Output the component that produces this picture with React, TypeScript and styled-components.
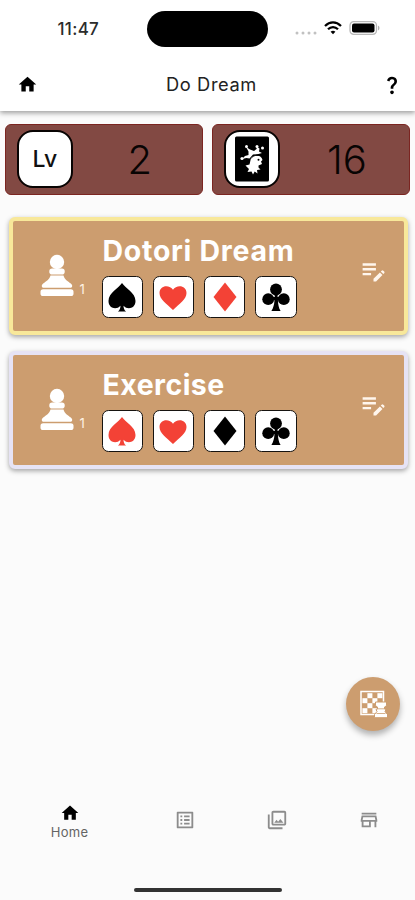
import React from "react";
import styled, { createGlobalStyle } from "styled-components";
import {
  MdHome,
  MdQuestionMark,
  MdEditNote,
  MdOutlineListAlt,
  MdOutlinePhotoLibrary,
  MdOutlineStore,
} from "react-icons/md";

const GlobalStyle = createGlobalStyle`
  * { box-sizing: border-box; }
  html, body { margin: 0; background: #fbfbfb; }
  body { font-family: Inter, Roboto, sans-serif; color: #111; }
  svg { display: block; flex: none; }
`;

const Screen = styled.div`
  width: 415px;
  height: 900px;
  display: flex;
  flex-direction: column;
  background: #fbfbfb;
  overflow: hidden;
`;

const Header = styled.header`
  height: 111px;
  flex: none;
  background: #fff;
  box-shadow: 0 2px 5px rgba(0, 0, 0, 0.38);
`;

const StatusBar = styled.div`
  height: 58px;
  display: grid;
  grid-template-columns: 147px 121px 1fr;
  align-items: center;
`;

const Clock = styled.span`
  padding-left: 57.5px;
  font-size: 17px;
  font-weight: 500;
  letter-spacing: 0.3px;
  color: #2c2c2c;
`;

const Island = styled.div`
  height: 36px;
  border-radius: 18px;
  background: #000;
`;

const StatusIcons = styled.div`
  display: flex;
  align-items: center;
  padding-left: 27px;
  padding-bottom: 2px;
`;

const SignalSlot = styled.span`
  padding-top: 9px;
  margin-right: 7px;
`;

const BatterySlot = styled.span`
  margin-left: 6.5px;
`;

const TitleBar = styled.div`
  height: 53px;
  display: grid;
  grid-template-columns: 55px 1fr 47px;
  align-items: center;

  > svg { justify-self: center; }
`;

const AppTitle = styled.h1`
  margin: 0;
  padding-bottom: 2px;
  text-align: center;
  font-size: 18.3px;
  font-weight: 400;
  letter-spacing: 0.6px;
  color: #222;
`;

const Stats = styled.section`
  display: grid;
  grid-template-columns: 197.5px 197.5px;
  column-gap: 9.5px;
  padding: 13.4px 5px 0 5.4px;
`;

const StatCard = styled.div`
  height: 71px;
  display: grid;
  grid-template-columns: 56px 1fr;
  align-items: center;
  padding: 0 0 1px 10.5px;
  border: 1px solid #7b2521;
  border-radius: 6px;
  background: #824943;
`;

const StatBadge = styled.div`
  width: 56px;
  height: 58px;
  display: flex;
  align-items: center;
  justify-content: center;
  border: 2px solid #080403;
  border-radius: 16px;
  background: #fff;
  font-size: 23px;
  font-weight: 500;
`;

const StatValue = styled.span`
  padding-top: 2px;
  padding-left: 5px;
  text-align: center;
  font-size: 40px;
  line-height: 1;
  font-weight: 300;
  color: #080403;
`;

const Dreams = styled.main`
  display: flex;
  flex-direction: column;
  gap: 16px;
  padding: 21.2px 7px 0 8.5px;
`;

const DreamCard = styled.article<{ $edge: string }>`
  height: 118px;
  display: grid;
  grid-template-columns: 90px 1fr 62px;
  border: 4.5px solid ${(p) => p.$edge};
  border-radius: 6px;
  background: #cc9d6f;
  box-shadow: 0 2px 5px rgba(0, 0, 0, 0.35);
`;

const Piece = styled.div`
  display: flex;
  align-items: flex-end;
  height: 76px;
  padding-left: 27px;
  color: #fff;
`;

const PieceCount = styled.span`
  margin-left: 6px;
  font-size: 13px;
  line-height: 15px;
  color: #fff2e5;
`;

const DreamTitle = styled.h2<{ $spacing: number }>`
  margin: 12px 0 0;
  font-size: 28.5px;
  line-height: 36px;
  font-weight: 700;
  letter-spacing: ${(p) => p.$spacing}px;
  color: #fff;
  white-space: nowrap;
`;

const Suits = styled.div`
  display: flex;
  gap: 9.7px;
  margin-top: 7.5px;
  margin-left: -1px;
`;

const SuitTile = styled.div<{ $red: boolean }>`
  width: 41.5px;
  height: 42px;
  display: flex;
  align-items: center;
  justify-content: center;
  border: 1.5px solid #161310;
  border-radius: 6.5px;
  background: #fff;
  color: ${(p) => (p.$red ? "#f34236" : "#000")};
`;

const Edit = styled.div`
  display: flex;
  align-items: center;
  justify-content: center;
  padding: 0 0 10px 1px;
  color: #fff6ed;
`;

const FabRow = styled.div`
  display: flex;
  justify-content: flex-end;
  margin-top: auto;
  padding-right: 15px;
`;

const Fab = styled.button`
  width: 54px;
  height: 54px;
  display: flex;
  align-items: center;
  justify-content: center;
  padding: 0;
  border: 0;
  border-radius: 50%;
  background: #cc9d6f;
  box-shadow: 0 4px 6px rgba(0, 0, 0, 0.3);
`;

const Nav = styled.nav`
  height: 84px;
  flex: none;
  display: grid;
  grid-template-columns: 139px 92px 92px 92px;
  margin-top: 49px;
  padding-top: 23px;
`;

const NavItem = styled.div<{ $active?: boolean }>`
  display: flex;
  flex-direction: column;
  align-items: center;
  padding-top: ${(p) => (p.$active ? 0 : 6)}px;
  color: ${(p) => (p.$active ? "#000" : "#8c8c8c")};
`;

const NavLabel = styled.span`
  margin-top: 2px;
  font-size: 13px;
  line-height: 15px;
  letter-spacing: 0.3px;
  color: #646464;
`;

const HomeIndicator = styled.div`
  width: 148px;
  height: 4px;
  flex: none;
  margin: 24px 0 8px 134px;
  border-radius: 2px;
  background: #333;
`;

type SuitName = "spade" | "heart" | "diamond" | "club";

const suitShapes: Record<SuitName, React.ReactNode> = {
  spade: (
    <path d="M15 1C12 6 1.500 10.500 1.500 19c0 7.500 8 9.300 12 4.700-.1 2.600-.7 4.300-2.600 5.800h8.200c-1.900-1.500-2.500-3.200-2.600-5.800 4 4.600 12 2.800 12-4.700C28.500 10.500 18 6 15 1Z" />
  ),
  heart: (
    <path d="M15 28C8.500 21.500 1.500 17.500 1.500 11c0-8.200 10.200-8.800 13.500-3.200C18.300 2.200 28.500 2.800 28.500 11c0 6.500-7 10.500-13.500 17Z" />
  ),
  diamond: <path d="M15 0.500 26.500 15 15 29.500 3.500 15Z" />,
  club: (
    <>
      <circle cx="15" cy="7.500" r="5.900" />
      <circle cx="7.200" cy="17.200" r="5.900" />
      <circle cx="22.800" cy="17.200" r="5.900" />
      <path d="M13 10h4l-.5 5 4-.5v4l-3.600-.3c.2 4 .8 7.800 2.700 10.800h-9.200c1.900-3 2.900-6.800 3.100-10.800l-3.600.3v-4l4 .5Z" />
    </>
  ),
};

function Suit({ name }: { name: SuitName }) {
  return (
    <svg width="30" height="30" viewBox="0 0 30 30" fill="currentColor">
      {suitShapes[name]}
    </svg>
  );
}

function Pawn() {
  return (
    <svg width="34" height="43" viewBox="0 0 34 43" fill="currentColor">
      <circle cx="17" cy="8" r="7.200" />
      <rect x="9.300" y="14.500" width="15.400" height="6" rx="2.800" />
      <path d="M10.500 21.500h13c1.200 4.200 4.200 5.700 7.300 8 2.300 1.800 1.700 4.300-.8 4.300H4c-2.500 0-3.100-2.500-.8-4.300 3.100-2.300 6.100-3.800 7.300-8Z" />
      <rect x="0.500" y="35.200" width="33" height="6.900" rx="2.600" />
    </svg>
  );
}

function Joker() {
  return (
    <svg width="36" height="46" viewBox="0 0 36 46">
      <rect x="1" y="0.500" width="34" height="45" rx="1.500" fill="#000" />
      <g fill="#fff">
        <path d="M12 11 16 13.500 20 15 22.500 13 23 11 25.500 12.500 25 15.500 28 17 24.500 18 19 18.500 15.500 22.500 12.500 22 8 23 11 20 14.500 19 14.500 15.500Z" />
        <circle cx="12.500" cy="10.500" r="1.500" />
        <circle cx="23" cy="10.500" r="1.500" />
        <circle cx="28.500" cy="12" r="1.500" />
        <circle cx="8" cy="22.500" r="1.600" />
        <path d="M17 22c3-3.800 10.500-3 11.500 2l-1.500 1.500 1 2.500-3.500 1.500v2l2 2-3.500.5.500 3.500-2.800-2-1.700 3-1.500-3-4 .5 1.500-3-3.500-3.500 4-1Z" />
      </g>
      <circle cx="24.500" cy="23.700" r="1" fill="#000" />
      <path d="M17 22.500c2-3 5-3.500 8.500-3" fill="none" stroke="#000" strokeWidth="1" />
    </svg>
  );
}

function Wifi() {
  return (
    <svg width="18" height="14" viewBox="0 0 18 14" fill="none" stroke="#000" strokeWidth="2.200">
      <path d="M1 5C5.800.1 12.200.1 17 5M4 8.300c2.900-3 7.100-3 10 0" />
      <path d="M6.600 10.700c1.400-1.300 3.400-1.300 4.800 0L9 13.300Z" fill="#000" stroke="none" />
    </svg>
  );
}

function Signal() {
  return (
    <svg width="22" height="4" viewBox="0 0 22 4" fill="#c1c1c1">
      {[2, 8, 14, 20].map((x) => (
        <circle key={x} cx={x} cy="2" r="1.500" />
      ))}
    </svg>
  );
}

function Battery() {
  return (
    <svg width="32" height="14" viewBox="0 0 32 14">
      <rect x="1" y="0.700" width="26.500" height="12.600" rx="3.700" fill="none" stroke="#b8b8b8" strokeWidth="1.300" />
      <rect x="3" y="2.500" width="22.500" height="9" rx="2" fill="#000" />
      <path d="M29 4.500c2 1 2 4 0 5Z" fill="#b0b0b0" />
    </svg>
  );
}

const boardSquares = [
  [1, 0], [3, 0], [0, 1], [2, 1], [1, 2], [3, 2], [0, 3], [2, 3],
];

function ChessBoard() {
  return (
    <svg width="28" height="28" viewBox="0 0 28 28">
      <rect x="2" y="1.500" width="22.500" height="23" fill="none" stroke="#fff" strokeWidth="1.500" />
      <g fill="#fff">
        {boardSquares.map(([x, y]) => (
          <rect key={`${x}-${y}`} x={3.4 + x * 5} y={3.2 + y * 5} width="5" height="5" />
        ))}
      </g>
      <path
        d="M16.500 12h11v3.700l-2 1.300v1.800l1.500.7-1 2 2.500 3v3.200H15.500v-3.200l2.500-3-1-2 1.500-.7V17l-2-1.300Z"
        fill="#fff"
        stroke="#cc9d6f"
        strokeWidth="1"
      />
      <path d="M18 18.800h8M17.500 23.500h9" stroke="#cc9d6f" strokeWidth="0.800" />
    </svg>
  );
}

const dreams: {
  title: string;
  edge: string;
  spacing: number;
  suits: { name: SuitName; red: boolean }[];
}[] = [
  {
    title: "Dotori Dream",
    edge: "#f8e89a",
    spacing: 0.72,
    suits: [
      { name: "spade", red: false },
      { name: "heart", red: true },
      { name: "diamond", red: true },
      { name: "club", red: false },
    ],
  },
  {
    title: "Exercise",
    edge: "#e6e3f5",
    spacing: 0.45,
    suits: [
      { name: "spade", red: true },
      { name: "heart", red: true },
      { name: "diamond", red: false },
      { name: "club", red: false },
    ],
  },
];

export default function App() {
  return (
    <Screen>
      <GlobalStyle />
      <Header>
        <StatusBar>
          <Clock>11:47</Clock>
          <Island />
          <StatusIcons>
            <SignalSlot><Signal /></SignalSlot>
            <Wifi />
            <BatterySlot><Battery /></BatterySlot>
          </StatusIcons>
        </StatusBar>
        <TitleBar>
          <MdHome size={21} color="#000" />
          <AppTitle>Do Dream</AppTitle>
          <MdQuestionMark size={22} color="#000" />
        </TitleBar>
      </Header>
      <Stats>
        <StatCard>
          <StatBadge>Lv</StatBadge>
          <StatValue>2</StatValue>
        </StatCard>
        <StatCard>
          <StatBadge><Joker /></StatBadge>
          <StatValue>16</StatValue>
        </StatCard>
      </Stats>
      <Dreams>
        {dreams.map((dream) => (
          <DreamCard key={dream.title} $edge={dream.edge}>
            <Piece>
              <Pawn />
              <PieceCount>1</PieceCount>
            </Piece>
            <div>
              <DreamTitle $spacing={dream.spacing}>{dream.title}</DreamTitle>
              <Suits>
                {dream.suits.map((suit) => (
                  <SuitTile key={suit.name} $red={suit.red}>
                    <Suit name={suit.name} />
                  </SuitTile>
                ))}
              </Suits>
            </div>
            <Edit><MdEditNote size={29} /></Edit>
          </DreamCard>
        ))}
      </Dreams>
      <FabRow>
        <Fab aria-label="Chess board"><ChessBoard /></Fab>
      </FabRow>
      <Nav>
        <NavItem $active>
          <MdHome size={20} />
          <NavLabel>Home</NavLabel>
        </NavItem>
        <NavItem><MdOutlineListAlt size={22} /></NavItem>
        <NavItem><MdOutlinePhotoLibrary size={22} /></NavItem>
        <NavItem><MdOutlineStore size={22} /></NavItem>
      </Nav>
      <HomeIndicator />
    </Screen>
  );
}
